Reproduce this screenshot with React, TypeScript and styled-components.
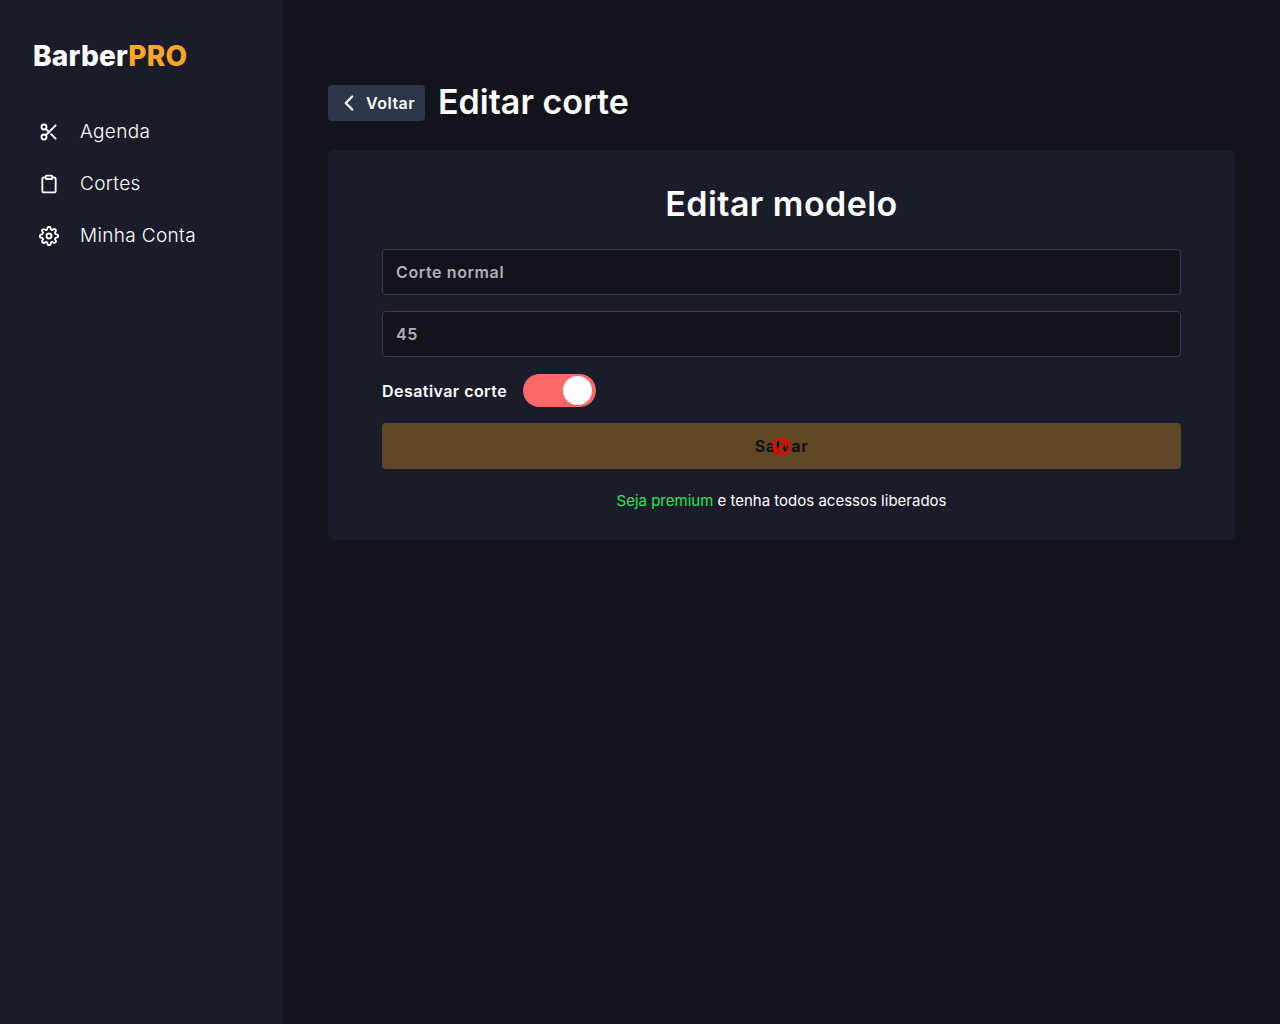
import React from 'react';
import styled, { createGlobalStyle } from 'styled-components';
import { FiClipboard, FiChevronLeft, FiScissors, FiSettings } from 'react-icons/fi';

const GlobalStyle = createGlobalStyle`
  * {
    box-sizing: border-box;
  }

  html,
  body {
    margin: 0;
    padding: 0;
    background: #12131b;
    font-family: 'Inter', 'Liberation Sans', sans-serif;
    color: #fff;
  }
`;

const Shell = styled.div`
  display: flex;
  width: 100%;
  min-height: 1024px;
`;

const Sidebar = styled.aside`
  width: 283px;
  flex-shrink: 0;
  background: #1b1c29;
  display: flex;
  flex-direction: column;
`;

const Logo = styled.h1`
  margin: 0;
  padding: 38px 0 0 33px;
  height: 106px;
  font-size: 28px;
  line-height: 36px;
  font-weight: 800;
  letter-spacing: 0.2px;

  span {
    color: #ffa72b;
  }
`;

const NavLink = styled.a`
  display: flex;
  align-items: center;
  height: 52px;
  padding: 0 0 1px 39px;
  gap: 21px;
  font-size: 19px;
  font-weight: 300;
  letter-spacing: 0.35px;
  color: #fff;

  svg {
    width: 20px;
    height: 20px;
    flex-shrink: 0;
    stroke-width: 2.2;
  }
`;

const Main = styled.main`
  flex: 1;
  padding: 85px 45px 0;
`;

const Header = styled.div`
  display: flex;
  align-items: center;
  gap: 13px;
  height: 36px;
  margin-bottom: 29px;
`;

const BackButton = styled.button`
  display: flex;
  align-items: center;
  gap: 4px;
  width: 97px;
  height: 36px;
  padding: 0 0 0 8px;
  border: 0;
  border-radius: 4px;
  background: #2d3748;
  color: #fff;
  font: 600 16px 'Inter', 'Liberation Sans', sans-serif;
  letter-spacing: 0.5px;

  svg {
    width: 26px;
    height: 26px;
    flex-shrink: 0;
  }
`;

const PageTitle = styled.h2`
  margin: -2px 0 0;
  font-size: 34px;
  line-height: 36px;
  font-weight: 600;
`;

const Card = styled.section`
  background: #1b1c29;
  border-radius: 6px;
  padding: 31px 54px 30px;
  height: 390px;
  display: flex;
  flex-direction: column;
`;

const CardTitle = styled.h3`
  margin: 0 0 23px;
  text-align: center;
  font-size: 34px;
  line-height: 45px;
  font-weight: 600;
  letter-spacing: 0.45px;
`;

const Field = styled.input`
  display: block;
  width: 100%;
  height: 46px;
  flex-shrink: 0;
  margin-bottom: 16px;
  padding: 0 13px;
  border: 1px solid #3a3b46;
  border-radius: 4px;
  background: #12131b;
  color: #b0b0b2;
  font: 600 16px 'Inter', 'Liberation Sans', sans-serif;
  letter-spacing: 0.6px;
  outline: none;
`;

const ToggleRow = styled.div`
  display: flex;
  align-items: center;
  gap: 16px;
  height: 33px;
  flex-shrink: 0;
  margin: 1px 0 16px;
`;

const ToggleLabel = styled.span`
  font-size: 16px;
  font-weight: 600;
  letter-spacing: 0.45px;
`;

const Toggle = styled.span`
  position: relative;
  display: block;
  width: 73px;
  height: 33px;
  border-radius: 17px;
  background: #ff6868;
`;

const ToggleKnob = styled.span`
  position: absolute;
  top: 2px;
  right: 4px;
  width: 29px;
  height: 29px;
  border-radius: 50%;
  background: #fff;
`;

const SaveButton = styled.button`
  position: relative;
  display: block;
  width: 100%;
  height: 46px;
  flex-shrink: 0;
  border: 0;
  border-radius: 4px;
  background: #604724;
  color: #12131b;
  font: 700 16px 'Inter', 'Liberation Sans', sans-serif;
  letter-spacing: 0.7px;
`;

const NotAllowedCursor = styled.svg`
  position: absolute;
  left: 390px;
  top: 14px;
  width: 19px;
  height: 19px;
`;

const Note = styled.p`
  margin: 22px 0 0;
  text-align: center;
  font-size: 15px;
  line-height: 20px;
  font-weight: 400;

  span {
    color: #1ee85a;
  }
`;

export default function App() {
  return (
    <>
      <GlobalStyle />
      <Shell>
        <Sidebar>
          <Logo>
            Barber<span>PRO</span>
          </Logo>
          <NavLink>
            <FiScissors />
            Agenda
          </NavLink>
          <NavLink>
            <FiClipboard />
            Cortes
          </NavLink>
          <NavLink>
            <FiSettings />
            Minha Conta
          </NavLink>
        </Sidebar>
        <Main>
          <Header>
            <BackButton>
              <FiChevronLeft />
              Voltar
            </BackButton>
            <PageTitle>Editar corte</PageTitle>
          </Header>
          <Card>
            <CardTitle>Editar modelo</CardTitle>
            <Field defaultValue="Corte normal" />
            <Field defaultValue="45" />
            <ToggleRow>
              <ToggleLabel>Desativar corte</ToggleLabel>
              <Toggle>
                <ToggleKnob />
              </Toggle>
            </ToggleRow>
            <SaveButton>
              Salvar
              <NotAllowedCursor viewBox="0 0 20 20">
                <circle cx="10" cy="10" r="8.2" fill="none" stroke="#ee0000" strokeWidth="3" />
                <path d="M4.5 15.5 L15.5 4.5" stroke="#ee0000" strokeWidth="3.2" />
              </NotAllowedCursor>
            </SaveButton>
            <Note>
              <span>Seja premium</span> e tenha todos acessos liberados
            </Note>
          </Card>
        </Main>
      </Shell>
    </>
  );
}
